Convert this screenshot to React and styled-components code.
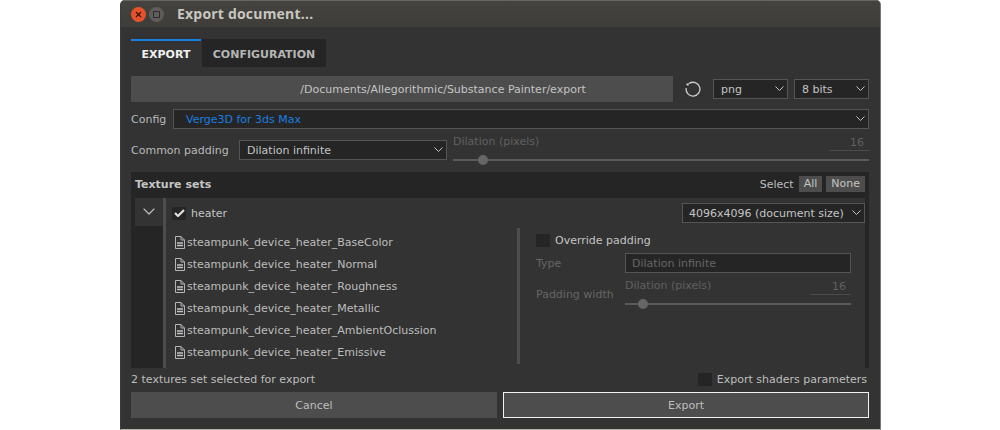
import React from "react";
import styled, { createGlobalStyle } from "styled-components";

const GlobalStyle = createGlobalStyle`
	html, body { margin: 0; padding: 0; background: #fff; }
	body { font-family: "DejaVu Sans", sans-serif; font-size: 11px; color: #bdbdbd; }
`;

const Page = styled.div`
	width: 1000px;
	height: 430px;
	box-sizing: border-box;
	padding-left: 120px;
	display: flex;
	overflow: hidden;
`;

const Window = styled.div`
	width: 761px;
	height: 430px;
	box-sizing: border-box;
	background: #333;
	border-radius: 5px 5px 0 0;
	border-right: 1px solid #777;
	border-bottom: 1px solid #b5b5ad;
	border-left: 1px solid #3c3c3c;
	display: flex;
	flex-direction: column;
	overflow: hidden;
`;

const TitleBar = styled.div`
	height: 27px;
	flex: none;
	box-sizing: border-box;
	border-top: 1px solid #66655f;
	background: linear-gradient(#44433f, #3e3d39);
	display: flex;
	align-items: center;
	padding-left: 10px;
`;

const WinButton = styled.div`
	width: 15px;
	height: 15px;
	border-radius: 50%;
	margin: 1px 3px 0 0;
	display: flex;
	align-items: center;
	justify-content: center;
	background: ${ props => (props.$close ? "#e6532a" : "#5e5d59") };
`;

const Title = styled.div`
	margin: -1px 0 0 10px;
	font-family: "Open Sans", sans-serif;
	font-weight: 700;
	font-size: 14px;
	letter-spacing: 0.2px;
	color: #c8c7c0;
`;

const Body = styled.div`
	flex: 1;
	padding: 12px 11px 0 10px;
	display: flex;
	flex-direction: column;
`;

const Tabs = styled.div`
	display: flex;
	height: 28px;
	gap: 1px;
`;

const Tab = styled.div`
	width: ${ props => props.$width }px;
	box-sizing: border-box;
	display: flex;
	align-items: center;
	justify-content: center;
	font-weight: 700;
	font-size: 11px;
	color: ${ props => (props.$active ? "#f0f0f0" : "#b5b5b5") };
	background: ${ props => (props.$active ? "transparent" : "#252525") };
	border-top: 2px solid ${ props => (props.$active ? "#1a7fe0" : "#252525") };
`;

const PathRow = styled.div`
	display: flex;
	align-items: center;
	margin-top: 9px;
	height: 26px;
`;

const PathBar = styled.div`
	width: 542px;
	height: 26px;
	background: #4d4d4d;
	display: flex;
	align-items: center;
	justify-content: center;
	padding-left: 82px;
	box-sizing: border-box;
	color: #c4c4c4;
`;

const ResetButton = styled.div`
	width: 40px;
	display: flex;
	justify-content: center;
`;

const SelectBox = styled.div`
	box-sizing: border-box;
	height: 20px;
	width: ${ props => (props.$width ? `${ props.$width }px` : "auto") };
	flex: ${ props => (props.$width ? "none" : 1) };
	margin-left: ${ props => props.$gap || 0 }px;
	background: #252525;
	border: 1px solid #555;
	display: flex;
	align-items: center;
	justify-content: space-between;
	padding: 0 3px 0 ${ props => props.$indent || 6 }px;
	color: ${ props => props.$color || "#c4c4c4" };
`;

const Chevron = ({ size = 9, color = "#c4c4c4" }) => (
	<svg width={ size } height={ size * 0.6 } viewBox="0 0 10 6">
		<path d="M0.5 0.5 L5 5 L9.5 0.5" fill="none" stroke={ color } strokeWidth="1.1" />
	</svg>
);

const Row = styled.div`
	display: flex;
	align-items: center;
	height: 20px;
	margin-top: ${ props => props.$top }px;
`;

const Label = styled.div`
	width: ${ props => props.$width }px;
	flex: none;
	color: ${ props => (props.$dim ? "#666" : "#b9b9b9") };
`;

const SliderBlock = styled.div`
	flex: 1;
	margin: 0 0 4px ${ props => props.$gap || 0 }px;
	display: flex;
	flex-direction: column;
	color: #606060;
`;

const SliderHead = styled.div`
	display: flex;
	justify-content: space-between;
	height: 16px;
	line-height: 13px;
`;

const SliderValue = styled.div`
	width: 40px;
	height: 16px;
	box-sizing: border-box;
	text-align: right;
	padding-right: 5px;
	border-bottom: 1px solid #4a4a4a;
	line-height: 15px;
`;

const Track = styled.div`
	height: 2px;
	margin-top: 8px;
	background: #5a5a5a;
	display: flex;
	align-items: center;
`;

const Knob = styled.div`
	width: 10px;
	height: 10px;
	flex: none;
	margin-left: ${ props => props.$left }px;
	border-radius: 50%;
	background: #666;
`;

const Panel = styled.div`
	margin-top: 12px;
	height: 196px;
	background: #252525;
	display: flex;
	flex-direction: column;
`;

const PanelHead = styled.div`
	height: 26px;
	flex: none;
	display: flex;
	align-items: center;
	padding: 0 4px 2px;
	box-sizing: border-box;
`;

const PanelTitle = styled.div`
	flex: 1;
	font-weight: 700;
	color: #c4c4c4;
`;

const SmallButton = styled.div`
	height: 16px;
	line-height: 16px;
	padding: 0 5px;
	margin-left: ${ props => props.$gap }px;
	background: #4d4d4d;
	color: #c4c4c4;
`;

const PanelBody = styled.div`
	flex: 1;
	display: flex;
	padding: 0 4px;
	min-height: 0;
`;

const Toggle = styled.div`
	width: 28px;
	height: 28px;
	flex: none;
	background: #333;
	display: flex;
	align-items: center;
	justify-content: center;
`;

const SetArea = styled.div`
	flex: 1;
	background: #333;
	border-left: 3px solid #4d4d4d;
	display: flex;
	flex-direction: column;
`;

const SetHead = styled.div`
	height: 30px;
	flex: none;
	display: flex;
	align-items: center;
	justify-content: space-between;
	padding-left: 6px;
`;

const CheckLine = styled.div`
	display: flex;
	align-items: center;
	gap: 5px;
	color: ${ props => props.$color || "#c4c4c4" };
`;

const CheckBox = styled.div`
	width: 14px;
	height: 13px;
	background: #252525;
	display: flex;
	align-items: center;
	justify-content: center;
`;

const SetColumns = styled.div`
	flex: 1;
	display: flex;
`;

const FileList = styled.div`
	width: 351px;
	padding: 3px 0 0 9px;
	box-sizing: border-box;
`;

const FileRow = styled.div`
	height: 22px;
	display: flex;
	align-items: center;
	gap: 2px;
	color: #bdbdbd;
`;

const Override = styled.div`
	flex: 1;
	height: 136px;
	box-sizing: border-box;
	border-left: 3px solid #4d4d4d;
	padding: 6px 14px 0 16px;
	display: flex;
	flex-direction: column;
`;

const OverrideRow = styled.div`
	display: flex;
	align-items: center;
	margin-top: 6px;
`;

const Footer = styled.div`
	height: 24px;
	box-sizing: border-box;
	padding: 0 2px 2px 0;
	display: flex;
	align-items: center;
	justify-content: space-between;
`;

const Buttons = styled.div`
	display: flex;
	gap: 6px;
`;

const ActionButton = styled.div`
	flex: 1;
	height: 26px;
	box-sizing: border-box;
	background: #4d4d4d;
	border: 1px solid ${ props => (props.$primary ? "#f2f2f2" : "#4d4d4d") };
	display: flex;
	align-items: center;
	justify-content: center;
	color: #bdbdbd;
`;

const FileIcon = () => (
	<svg width="10" height="13" viewBox="0 0 10 13">
		<path d="M0.5 0.5 H6 L9.5 4 V12.5 H0.5 Z M6 0.5 V4 H9.5" fill="none" stroke="#b5b5b5" />
		<path d="M2 7 H8 M2 9.5 H8" stroke="#c4c4c4" strokeWidth="1.4" />
	</svg>
);

const files = [
	"BaseColor",
	"Normal",
	"Roughness",
	"Metallic",
	"AmbientOclussion",
	"Emissive",
];

export default function App() {
	return (
		<Page>
			<GlobalStyle />
			<Window>
				<TitleBar>
					<WinButton $close>
						<svg width="7" height="7" viewBox="0 0 7 7">
							<path d="M1 1 L6 6 M6 1 L1 6" stroke="#3a1408" strokeWidth="1.2" />
						</svg>
					</WinButton>
					<WinButton>
						<svg width="7" height="7" viewBox="0 0 7 7">
							<rect x="0.5" y="0.5" width="6" height="6" fill="none" stroke="#2e2d2a" />
						</svg>
					</WinButton>
					<Title>Export document...</Title>
				</TitleBar>
				<Body>
					<Tabs>
						<Tab $active $width={ 70 }>EXPORT</Tab>
						<Tab $width={ 124 }>CONFIGURATION</Tab>
					</Tabs>
					<PathRow>
						<PathBar>/Documents/Allegorithmic/Substance Painter/export</PathBar>
						<ResetButton>
							<svg width="18" height="16" viewBox="0 0 18 16">
								<path d="M5.2 2.4 A6.9 6.9 0 1 1 2.2 7" fill="none" stroke="#cfcfcf" strokeWidth="1.3" />
								<path d="M1.8 3 L5 2 L4.2 5.2 Z" fill="#cfcfcf" />
							</svg>
						</ResetButton>
						<SelectBox $width={ 75 } $indent={ 7 }>png<Chevron /></SelectBox>
						<SelectBox $width={ 75 } $gap={ 6 } $indent={ 7 }>8 bits<Chevron /></SelectBox>
					</PathRow>
					<Row $top={ 7 }>
						<Label $width={ 42 }>Config</Label>
						<SelectBox $indent={ 12 } $color="#1a7fe0">Verge3D for 3ds Max<Chevron /></SelectBox>
					</Row>
					<Row $top={ 11 }>
						<Label $width={ 108 }>Common padding</Label>
						<SelectBox $width={ 208 } $indent={ 7 }>Dilation infinite<Chevron /></SelectBox>
						<SliderBlock $gap={ 6 }>
							<SliderHead>
								<span>Dilation (pixels)</span>
								<SliderValue>16</SliderValue>
							</SliderHead>
							<Track><Knob $left={ 25 } /></Track>
						</SliderBlock>
					</Row>
					<Panel>
						<PanelHead>
							<PanelTitle>Texture sets</PanelTitle>
							<span>Select</span>
							<SmallButton $gap={ 5 }>All</SmallButton>
							<SmallButton $gap={ 4 }>None</SmallButton>
						</PanelHead>
						<PanelBody>
							<Toggle><Chevron size={ 12 } color="#bbb" /></Toggle>
							<SetArea>
								<SetHead>
									<CheckLine>
										<CheckBox>
											<svg width="11" height="8" viewBox="0 0 11 8">
												<path d="M1 4 L4 7 L10 1" fill="none" stroke="#e0e0e0" strokeWidth="2.2" />
											</svg>
										</CheckBox>
										heater
									</CheckLine>
									<SelectBox $width={ 183 } $indent={ 6 }>4096x4096 (document size)<Chevron /></SelectBox>
								</SetHead>
								<SetColumns>
									<FileList>
										{ files.map(name => (
											<FileRow key={ name }>
												<FileIcon />
												steampunk_device_heater_{ name }
											</FileRow>
										)) }
									</FileList>
									<Override>
										<CheckLine>
											<CheckBox />
											Override padding
										</CheckLine>
										<OverrideRow>
											<Label $dim $width={ 89 }>Type</Label>
											<SelectBox $indent={ 6 } $color="#666">Dilation infinite</SelectBox>
										</OverrideRow>
										<OverrideRow>
											<Label $dim $width={ 89 }>Padding width</Label>
											<SliderBlock>
												<SliderHead>
													<span>Dilation (pixels)</span>
													<SliderValue>16</SliderValue>
												</SliderHead>
												<Track><Knob $left={ 13 } /></Track>
											</SliderBlock>
										</OverrideRow>
									</Override>
								</SetColumns>
							</SetArea>
						</PanelBody>
					</Panel>
					<Footer>
						<span>2 textures set selected for export</span>
						<CheckLine $color="#bdbdbd">
							<CheckBox />
							Export shaders parameters
						</CheckLine>
					</Footer>
					<Buttons>
						<ActionButton>Cancel</ActionButton>
						<ActionButton $primary>Export</ActionButton>
					</Buttons>
				</Body>
			</Window>
		</Page>
	);
}
